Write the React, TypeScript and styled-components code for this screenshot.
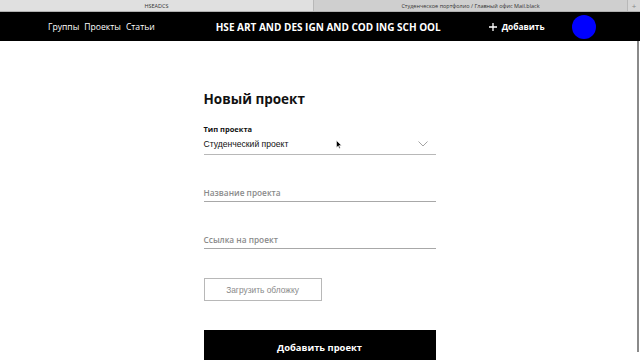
import styled, { createGlobalStyle } from 'styled-components';

const GlobalStyle = createGlobalStyle`
  html, body {
    margin: 0;
    padding: 0;
    background: #fff;
    overflow: hidden;
  }
  body {
    font-family: 'Open Sans', 'Liberation Sans', sans-serif;
  }
`;

const Page = styled.div`
  width: 640px;
  height: 360px;
  display: flex;
  flex-direction: column;
  overflow: hidden;
`;

const TabBar = styled.div`
  height: 11px;
  flex-shrink: 0;
  display: flex;
  background: #d6d6d6;
  border-bottom: 1px solid #b0b0b0;
  font-size: 5.5px;
  color: #333;
`;

const Tab = styled.div<{ active?: boolean }>`
  flex: 1;
  display: flex;
  align-items: center;
  justify-content: center;
  background: ${(p) => (p.active ? '#e0e0e0' : '#cfcfcf')};
  border-right: 1px solid #b8b8b8;
`;

const NewTab = styled.div`
  width: 12px;
  display: flex;
  align-items: center;
  justify-content: center;
  color: #888;
  font-size: 8px;
`;

const Nav = styled.header`
  height: 29px;
  flex-shrink: 0;
  background: #000;
  color: #fff;
  display: flex;
  align-items: center;
  padding-left: 48px;
`;

const Links = styled.nav`
  display: flex;
  gap: 5px;
  font-size: 8.6px;
`;

const Title = styled.div`
  margin-left: 61px;
  font-weight: 700;
  font-size: 10px;
  white-space: nowrap;
`;

const AddLink = styled.div`
  margin-left: 48px;
  display: flex;
  align-items: center;
  gap: 5px;
  font-weight: 700;
  font-size: 8.4px;
`;

const Avatar = styled.div`
  margin-left: 27px;
  width: 24px;
  height: 24px;
  border-radius: 50%;
  background: #0000ff;
`;

const Body = styled.div`
  flex: 1;
  min-height: 0;
  display: flex;
`;

const Main = styled.main`
  flex: 1;
  display: flex;
  justify-content: center;
  padding-left: 4px;
`;

const Scrollbar = styled.div`
  width: 4px;
  padding: 0 1px 8px 0;
  display: flex;
  justify-content: flex-end;
`;

const Thumb = styled.div`
  width: 2px;
  background: #8a8a8a;
`;

const Form = styled.div`
  width: 232px;
  display: flex;
  flex-direction: column;
  padding-top: 47px;
  position: relative;
  & > * {
    flex-shrink: 0;
  }
`;

const Heading = styled.h1`
  margin: 0;
  font-size: 13.5px;
  font-weight: 700;
  line-height: 22px;
  color: #111;
`;

const Label = styled.div`
  margin-top: 14px;
  font-size: 7.5px;
  font-weight: 700;
  color: #111;
  line-height: 10px;
`;

const SelectRow = styled.div`
  display: flex;
  align-items: center;
  justify-content: space-between;
  height: 20px;
  border-bottom: 1px solid #b8b8b8;
  font-family: 'Liberation Sans', Arial, sans-serif;
  font-size: 8.6px;
  color: #111;
  padding-right: 8px;
`;

const Field = styled.div`
  margin-top: 28px;
  height: 18px;
  display: flex;
  align-items: center;
  border-bottom: 1px solid #a8a8a8;
  font-size: 8.3px;
  font-weight: 600;
  color: #8a8a8a;
`;

const UploadButton = styled.div`
  margin-top: 29px;
  width: 118px;
  height: 23px;
  box-sizing: border-box;
  border: 1px solid #b8b8b8;
  display: flex;
  align-items: center;
  justify-content: center;
  font-family: 'Liberation Sans', Arial, sans-serif;
  font-size: 8.4px;
  color: #8a8a8a;
`;

const SubmitButton = styled.div`
  margin-top: 29px;
  height: 34px;
  background: #000;
  color: #fff;
  display: flex;
  align-items: center;
  justify-content: center;
  font-size: 9.4px;
  font-weight: 700;
`;

const Cursor = styled.svg`
  position: absolute;
  left: 132px;
  top: 99px;
`;

const Chevron = () => (
  <svg width="10" height="6" viewBox="0 0 10 6">
    <path d="M0.5 0.5 L5 5 L9.5 0.5" fill="none" stroke="#9a9a9a" strokeWidth="0.9" />
  </svg>
);

const Plus = () => (
  <svg width="8" height="8" viewBox="0 0 8 8">
    <path d="M4 0 V8 M0 4 H8" stroke="#fff" strokeWidth="1.3" />
  </svg>
);

export default function App() {
  return (
    <Page>
      <GlobalStyle />
      <TabBar>
        <Tab active>HSEADCS</Tab>
        <Tab>Студенческое портфолио / Главный офис Mail.black</Tab>
        <NewTab>+</NewTab>
      </TabBar>
      <Nav>
        <Links>
          <span>Группы</span>
          <span>Проекты</span>
          <span>Статьи</span>
        </Links>
        <Title>HSE ART AND DES IGN AND COD ING SCH OOL</Title>
        <AddLink>
          <Plus />
          Добавить
        </AddLink>
        <Avatar />
      </Nav>
      <Body>
        <Main>
          <Form>
            <Heading>Новый проект</Heading>
            <Label>Тип проекта</Label>
            <SelectRow>
              Студенческий проект
              <Chevron />
            </SelectRow>
            <Field>Название проекта</Field>
            <Field>Ссылка на проект</Field>
            <UploadButton>Загрузить обложку</UploadButton>
            <SubmitButton>Добавить проект</SubmitButton>
            <Cursor width="6" height="9" viewBox="0 0 6 9">
              <path d="M0.5 0.5 V7.5 L2.2 5.9 L3.4 8.5 L4.3 8.1 L3.2 5.5 L5.5 5.5 Z" fill="#000" stroke="#fff" strokeWidth="0.5" />
            </Cursor>
          </Form>
        </Main>
        <Scrollbar>
          <Thumb />
        </Scrollbar>
      </Body>
    </Page>
  );
}
